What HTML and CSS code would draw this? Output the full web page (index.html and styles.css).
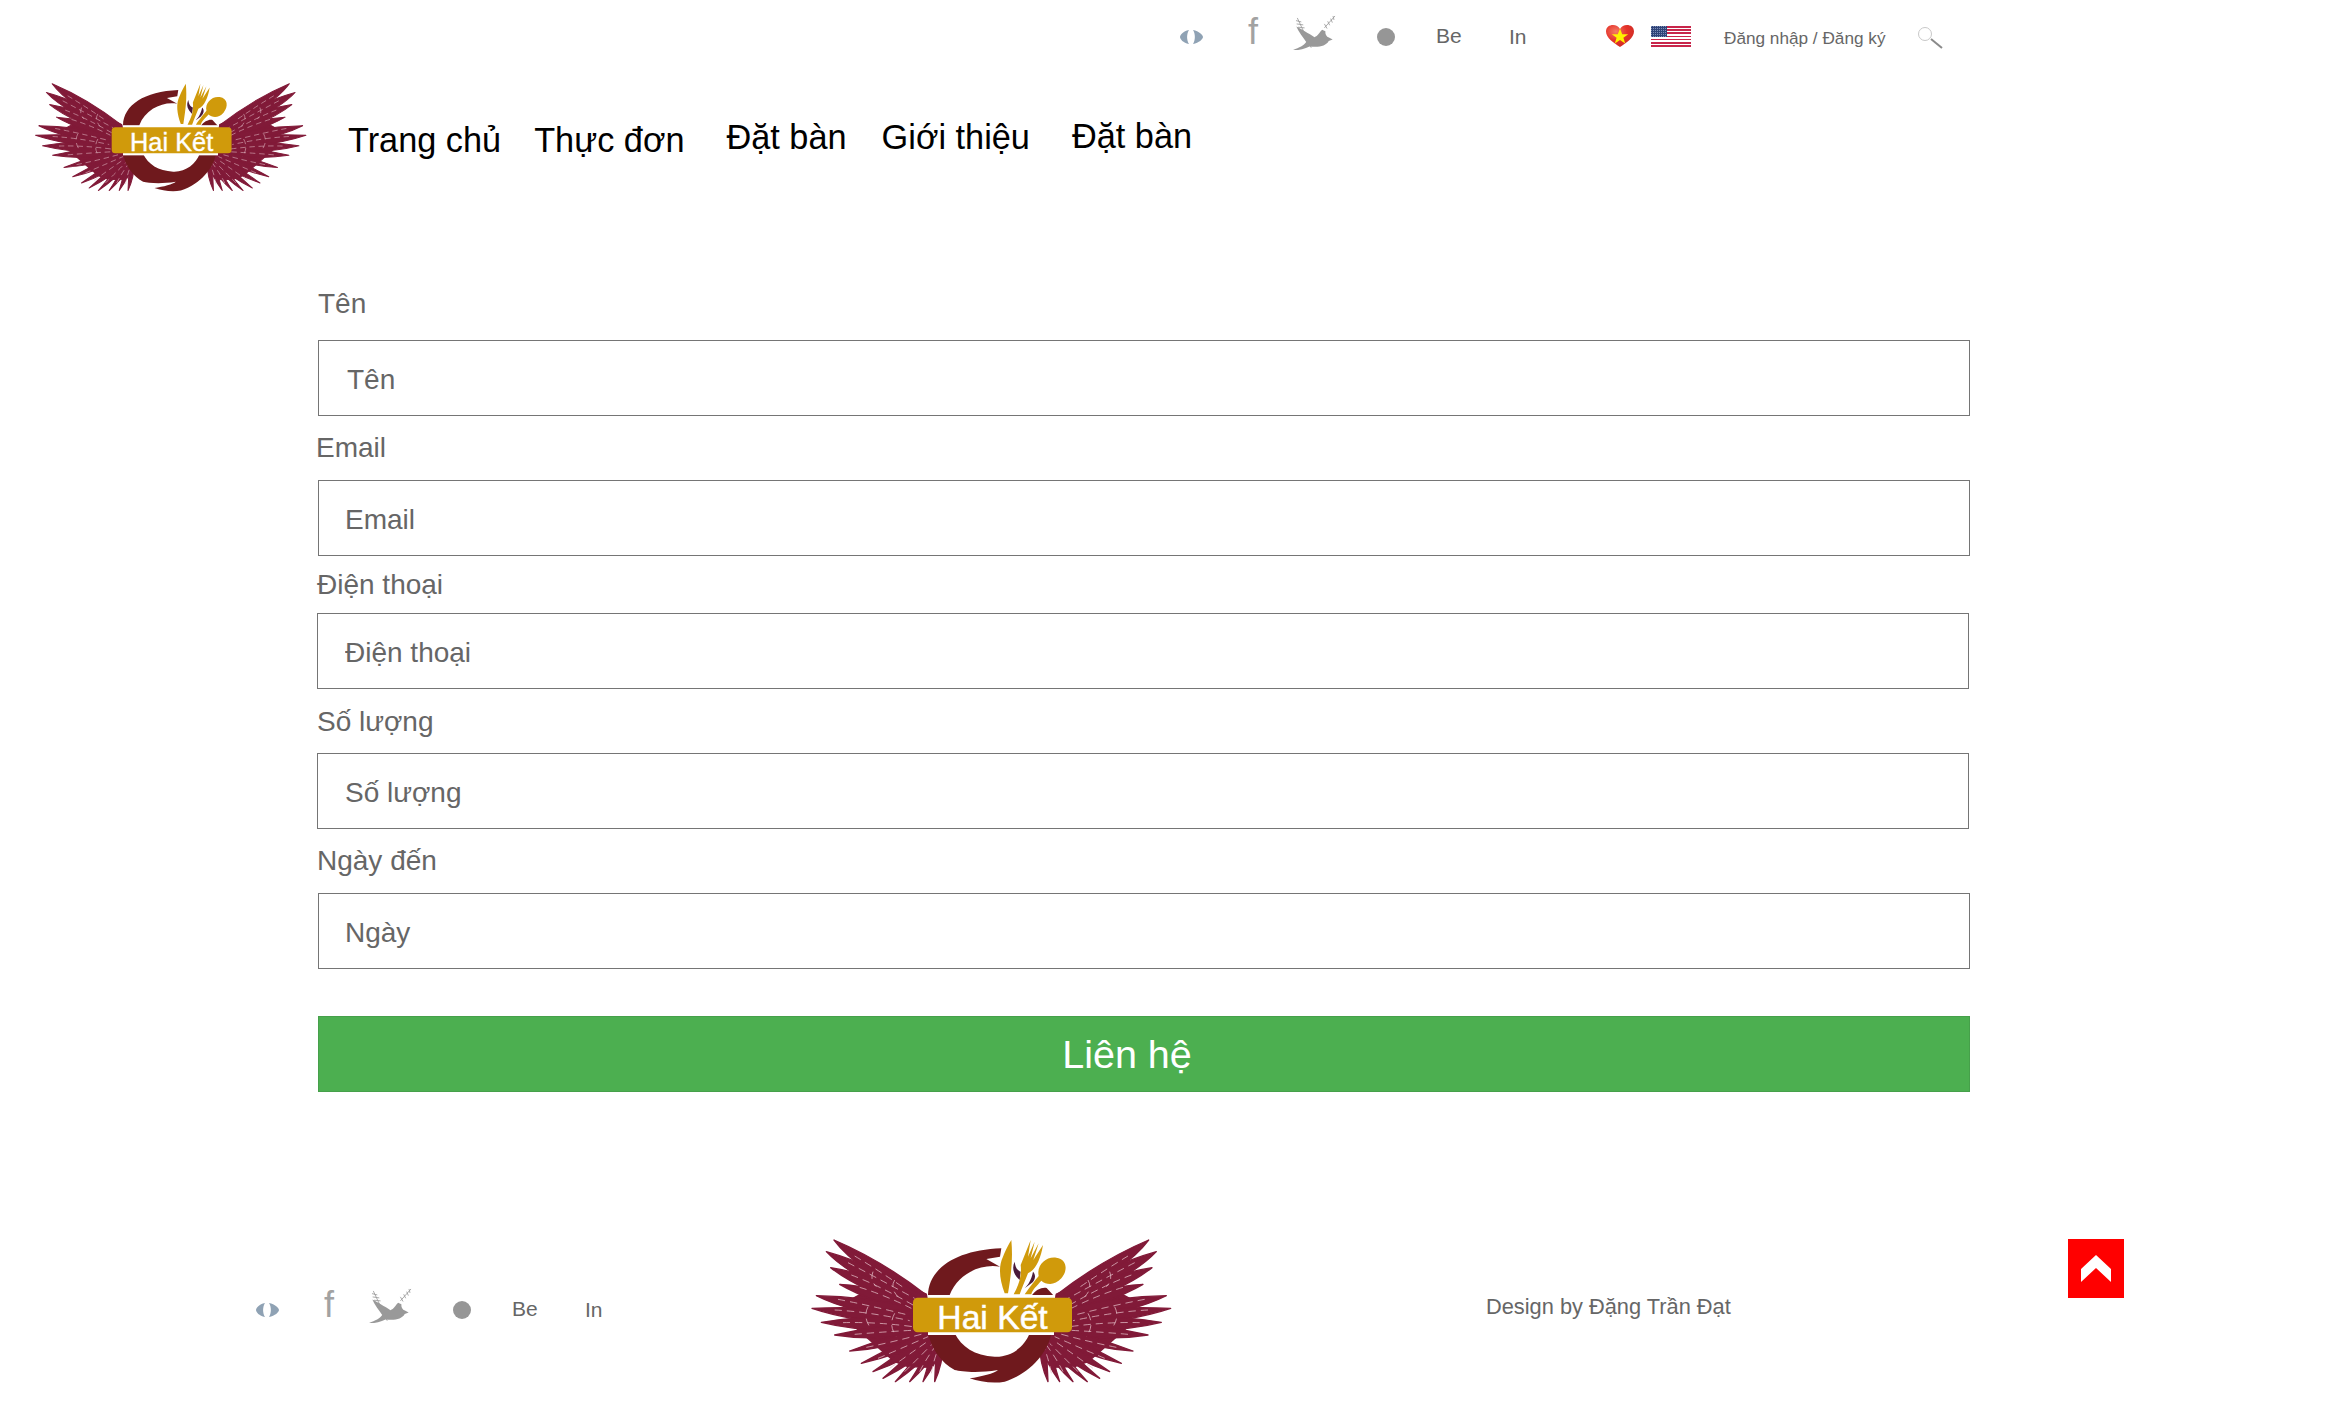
FILE: index.html
```html
<!DOCTYPE html>
<html lang="vi">
<head>
<meta charset="utf-8">
<title>Hai Kết</title>
<link rel="stylesheet" href="styles.css">
</head>
<body>
<svg class="defs" width="0" height="0" aria-hidden="true">
  <defs>
    <g id="wing">
      <path d="M385 192L330 168L205 90L190 130L215 178L165 205L155 245L170 290L215 330L255 365L290 395L330 410L400 412L435 345L395 250Z"/>
      <path d="M385 195Q250 90 108 30Q170 115 385 228Z"/>
      <path d="M385 205Q230 105 85 65Q160 145 385 238Z"/>
      <path d="M385 215Q240 135 98 113Q185 182 385 248Z"/>
      <path d="M385 225Q250 170 125 163Q215 215 385 258Z"/>
      <path d="M345 232Q200 200 55 197Q160 250 345 268Z"/>
      <path d="M345 245Q190 228 42 235Q160 275 345 285Z"/>
      <path d="M350 260Q210 255 70 277Q195 308 350 298Z"/>
      <path d="M360 280Q240 285 110 315Q235 335 370 308Z"/>
      <path d="M375 295Q270 320 155 363Q280 355 385 315Z"/>
      <path d="M385 305Q290 345 190 400Q300 375 395 325Z"/>
      <path d="M388 312Q310 365 225 425Q325 390 400 335Z"/>
      <path d="M392 318Q330 380 255 445Q345 400 405 345Z"/>
      <path d="M395 325Q350 390 292 455Q365 405 412 350Z"/>
      <path d="M400 330Q375 395 335 455Q390 405 420 355Z"/>
      <path d="M405 330Q395 395 375 455Q415 400 430 350Z"/>
      <path d="M412 330Q415 395 410 455Q435 400 435 345Z"/>
      <g class="wing-veins">
        <path d="M170 78Q240 120 320 175"/>
        <path d="M150 98Q230 140 350 205"/>
        <path d="M160 135Q240 165 345 225"/>
        <path d="M185 172Q260 195 340 235"/>
        <path d="M120 208Q210 225 330 255"/>
        <path d="M110 240Q210 245 335 272"/>
        <path d="M135 278Q230 275 345 290"/>
        <path d="M170 313Q260 305 360 300"/>
        <path d="M205 352Q290 335 380 310"/>
        <path d="M240 385Q310 355 390 320"/>
        <path d="M275 415Q330 375 395 330"/>
        <path d="M320 425Q360 385 405 340"/>
        <path d="M365 425Q385 385 415 345"/>
        <path d="M400 430Q408 385 425 345"/>
        <path d="M225 125Q215 150 235 170"/>
        <path d="M290 150Q275 175 300 200"/>
        <path d="M210 230Q195 260 215 290"/>
        <path d="M290 250Q270 285 295 320"/>
      </g>
    </g>
    <g id="logo">
      <use href="#wing" class="wing"/>
      <use href="#wing" class="wing" transform="matrix(-1 0 0 1 1160 0)"/>
      <path class="logo-ring" d="M760 310C750 365 700 430 620 455C585 462 545 455 515 445C550 440 590 430 600 420C540 430 490 425 470 420C430 400 400 355 390 310L390 195C392 115 475 60 610 55L606 80L565 87L606 110C550 100 480 130 455 195L470 310C490 350 530 378 590 380C640 382 680 350 695 310Z"/>
      <path class="logo-ring" d="M700 198C712 178 735 170 746 174L768 198Z"/>
      <path class="logo-accent" d="M650 95C640 115 648 135 665 150L668 125C655 120 652 108 650 95ZM705 125C700 150 690 165 680 175L700 160C712 150 715 135 705 125Z"/>
      <rect class="logo-gap" x="390" y="195" width="378" height="120"/>
      <rect class="logo-bar" x="345" y="203" width="477" height="104" rx="14"/>
      <path class="logo-gold" d="M620 190C605 150 600 110 615 80C625 55 635 38 640 30C645 85 640 130 630 190Z"/>
      <path class="logo-gold" d="M647 193C662 165 672 140 668 105L698 30L690 80L710 35L698 85L722 40L706 90L735 45C728 85 715 118 690 130C680 155 672 175 665 193Z"/>
      <path class="logo-gold" d="M680 193C695 172 712 150 722 138C715 105 745 78 775 83C808 88 810 122 790 145C770 168 745 165 730 152C717 167 702 180 700 193Z"/>
      <text class="logo-text" x="418" y="298">Hai Kết</text>
    </g>
    <g id="social">
      <path class="soc-eye" d="M10 5C4 6 1 10 1 12C1 14 4 18 10 19C7.500 15 7.500 9 10 5ZM14 5C20 6 24 10 24 12C24 14 20 18 14 19C16.500 15 16.500 9 14 5Z"/>
    </g>
    <g id="bird">
      <path d="M5 109C25 102 37 96 45 85C35 70 22 55 15 38C30 45 53 60 70 70C80 68 85 55 93 48L103 52C102 60 105 68 115 72L125 77L113 82C105 98 80 102 55 98C40 105 20 110 5 109Z"/>
      <path class="bird-line" d="M18 12L60 102M14 20L30 24M16 30L36 33M20 40L40 42M100 42L132 6M100 30L108 44M110 22L116 34M119 14L124 26M126 6L129 18"/>
    </g>
  </defs>
</svg>

<header class="site-header">
  <div class="topbar">
    <div class="social">
      <svg class="ic-eye" viewBox="0 0 25 25"><use href="#social"/></svg>
      <span class="soc-f">f</span>
      <svg class="ic-bird" viewBox="0 0 140 115"><use href="#bird"/></svg>
      <span class="soc-dot"></span>
      <span class="soc-be">Be</span>
      <span class="soc-in">In</span>
    </div>
    <svg class="ic-heart" viewBox="0 0 28 22">
      <defs><radialGradient id="hg" cx="35%" cy="30%" r="80%"><stop offset="0" stop-color="#f47a66"/><stop offset=".5" stop-color="#e5332a"/><stop offset="1" stop-color="#c92a24"/></radialGradient></defs>
      <path fill="url(#hg)" d="M14 22C8 18 0 13 0 6.500C0 2 3.500 0 7 0C10 0 12.500 1.500 14 4C15.500 1.500 18 0 21 0C24.500 0 28 2 28 6.500C28 13 20 18 14 22Z"/>
      <path fill="#fff200" d="M14 3.500L16.200 9.200H22.200L17.400 12.800L19.200 18.500L14 15L8.800 18.500L10.600 12.800L5.800 9.200H11.800Z"/>
    </svg>
    <svg class="ic-flag" viewBox="0 0 40 21" shape-rendering="crispEdges">
      <defs><pattern id="st" width="2" height="2" patternUnits="userSpaceOnUse"><rect width="2" height="2" fill="#2f4478"/><rect width="1" height="1" fill="#7f8fb8"/></pattern></defs>
      <rect width="40" height="21" fill="#fff"/>
      <rect width="40" height="2" fill="#c8254a"/>
      <rect y="3.200" width="40" height="1.600" fill="#c8254a"/>
      <rect y="6.400" width="40" height="1.600" fill="#c8254a"/>
      <rect y="9.600" width="40" height="1.600" fill="#c8254a"/>
      <rect y="12.800" width="40" height="1.600" fill="#c8254a"/>
      <rect y="16" width="40" height="1.600" fill="#c8254a"/>
      <rect y="19.200" width="40" height="1.800" fill="#c8254a"/>
      <rect width="16" height="11" fill="url(#st)"/>
    </svg>
    <span class="auth">Đăng nhập / Đăng ký</span>
    <svg class="ic-search" viewBox="0 0 26 22">
      <circle class="search-lens" cx="8" cy="7" r="6.500"/>
      <path class="search-handle" d="M14 12L25 21"/>
    </svg>
  </div>
  <div class="navrow">
    <svg class="logo-small" viewBox="0 0 1170 480"><use href="#logo"/></svg>
    <nav class="nav">
      <a class="nav-link nav-home">Trang chủ</a>
      <a class="nav-link nav-menu">Thực đơn</a>
      <a class="nav-link nav-book">Đặt bàn</a>
      <a class="nav-link nav-about">Giới thiệu</a>
      <a class="nav-link nav-book2">Đặt bàn</a>
    </nav>
  </div>
</header>

<main>
  <form class="contact">
    <label class="lbl lbl-1">Tên</label>
    <input class="field field-name" type="text" placeholder="Tên">
    <label class="lbl lbl-2">Email</label>
    <input class="field" type="text" placeholder="Email">
    <label class="lbl lbl-3">Điện thoại</label>
    <input class="field field-left" type="text" placeholder="Điện thoại">
    <label class="lbl lbl-4">Số lượng</label>
    <input class="field field-left" type="text" placeholder="Số lượng">
    <label class="lbl lbl-5">Ngày đến</label>
    <input class="field" type="text" placeholder="Ngày">
    <button class="submit" type="button">Liên hệ</button>
  </form>
</main>

<footer class="site-footer">
  <div class="social">
    <svg class="ic-eye" viewBox="0 0 25 25"><use href="#social"/></svg>
    <span class="soc-f">f</span>
    <svg class="ic-bird" viewBox="0 0 140 115"><use href="#bird"/></svg>
    <span class="soc-dot"></span>
    <span class="soc-be">Be</span>
    <span class="soc-in">In</span>
  </div>
  <svg class="logo-big" viewBox="0 0 1170 480"><use href="#logo"/></svg>
  <p class="credit">Design by Đặng Trần Đạt</p>
  <a class="to-top" aria-label="Lên đầu trang">
    <svg viewBox="0 0 56 59" width="56" height="59"><path fill="#fff" d="M13 30L28 16L43 30V43L28 29L13 43Z"/></svg>
  </a>
</footer>
</body>
</html>
```
FILE: styles.css
```css
* { box-sizing: border-box; }
html, body { margin: 0; padding: 0; background: #fff; }
body {
  width: 2340px;
  height: 1424px;
  overflow: hidden;
  font-family: "Liberation Sans", Arial, sans-serif;
  color: #666;
}
.defs { position: absolute; }

/* logo parts */
.wing { fill: #811a38; stroke: #811a38; stroke-width: 4; stroke-linejoin: round; }
.wing-veins path { fill: none; stroke: #e3bcc6; stroke-width: 3; stroke-dasharray: 22 15; opacity: .75; }
.logo-ring { fill: #6f191d; }
.logo-accent { fill: #4a1a3a; }
.logo-gap { fill: #fff; }
.logo-bar, .logo-gold { fill: #d09a0b; }
.logo-text { fill: #fff; stroke: #fff; stroke-width: 1.500; font-family: "Liberation Sans", Arial, sans-serif; font-size: 101px; }

/* header */
.topbar {
  display: flex;
  align-items: center;
  height: 62px;
  padding: 12px 0 0 1179px;
}
.social { display: flex; align-items: center; height: 50px; }
.ic-eye { width: 25px; height: 25px; flex: none; }
.soc-eye { fill: #8fa2b4; }
.soc-f {
  width: 12px;
  margin-left: 44px;
  font-size: 36px;
  line-height: 36px;
  color: #a2a2a2;
  position: relative;
  top: -5px;
}
.ic-bird { width: 47px; height: 38px; margin-left: 31px; fill: #999; flex: none; position: relative; top: -4px; }
.bird-line { fill: none; stroke: #999; stroke-width: 2.500; }
.soc-dot { width: 18px; height: 18px; margin-left: 39px; border-radius: 50%; background: #969696; flex: none; }
.soc-be { width: 26px; margin-left: 41px; font-size: 21px; color: #666; position: relative; top: -1px; }
.soc-in { width: 17px; margin-left: 47px; font-size: 21px; color: #666; }

.ic-heart { width: 28px; height: 22px; margin-left: 80px; flex: none; position: relative; top: -1px; }
.ic-flag { width: 40px; height: 21px; margin-left: 17px; flex: none; position: relative; top: -1px; }
.auth { margin-left: 33px; font-size: 17.200px; color: #666; white-space: nowrap; position: relative; top: 1px; }
.ic-search { width: 26px; height: 22px; margin-left: 32px; flex: none; position: relative; top: 1px; }
.search-lens { fill: #fff; stroke: #c8c8c8; stroke-width: 1; }
.search-handle { fill: none; stroke: #8a8a8a; stroke-width: 2; }

.navrow { display: flex; align-items: flex-start; padding-left: 25px; margin-top: 14px; }
.logo-small { width: 294px; height: 121px; flex: none; }
.nav { display: flex; margin-left: 29px; padding-top: 42px; }
.nav-link { font-size: 34.300px; line-height: 44px; color: #000; white-space: nowrap; }
.nav-menu { margin-left: 33px; }
.nav-book { margin-left: 42px; margin-top: -3px; }
.nav-about { margin-left: 35px; margin-top: -3px; }
.nav-book2 { margin-left: 42px; margin-top: -4px; }

/* form */
.contact {
  display: flex;
  flex-direction: column;
  width: 1652px;
  margin-left: 318px;
  padding-top: 90px;
}
.lbl { display: block; height: 32px; font-size: 28px; line-height: 32px; }
.lbl-1 { margin-bottom: 20px; margin-top: 1px; }
.lbl-2 { margin: 16px 0 16px -2px; }
.lbl-3 { margin: 13px 0 12px -1px; }
.lbl-4 { margin: 17px 0 15px -1px; }
.lbl-5 { margin: 16px 0 16px -1px; }
.field {
  display: block;
  width: 100%;
  height: 76px;
  padding: 3px 0 0 26px;
  border: 1px solid #757575;
  background: #fff;
  font: 28px "Liberation Sans", Arial, sans-serif;
  color: #666;
}
.field-name { padding-left: 28px; }
.field-left { margin-left: -1px; padding-left: 27px; }
.field::placeholder { color: #666; opacity: 1; }
.submit {
  display: block;
  width: 100%;
  height: 76px;
  margin-top: 47px;
  padding: 0 34px 0 0;
  border: 1px solid #46a04a;
  background: #4caf50;
  color: #fff;
  font: 39.500px "Liberation Sans", Arial, sans-serif;
}

/* footer */
.site-footer { display: flex; align-items: flex-start; padding: 138px 0 0 255px; }
.site-footer .social { margin-top: 55px; }
.logo-big { width: 390px; height: 160px; margin-left: 196px; flex: none; }
.credit { margin: 63px 0 0 298px; font-size: 21.800px; line-height: 28px; color: #666; white-space: nowrap; }
.to-top { display: block; width: 56px; height: 59px; margin: 9px 0 0 337px; background: #f00; flex: none; }
.to-top svg { display: block; }
```
